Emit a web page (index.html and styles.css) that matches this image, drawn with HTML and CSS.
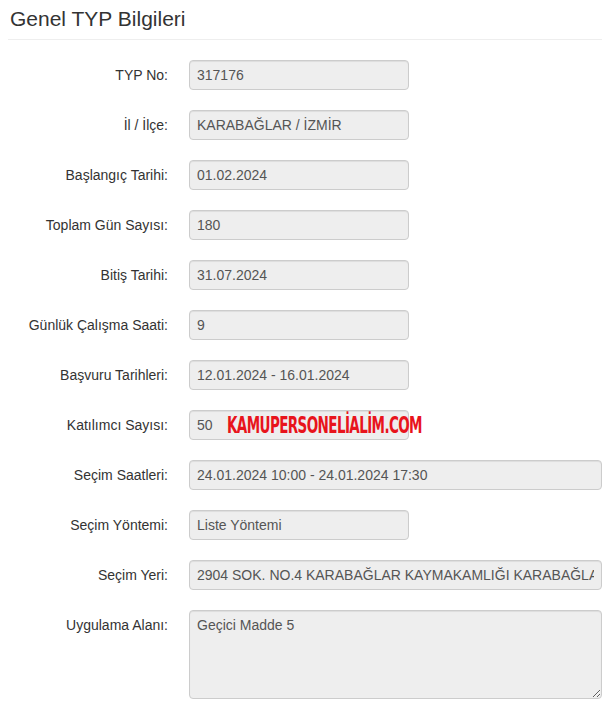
FILE: index.html
```html
<!DOCTYPE html>
<html lang="tr">
<head>
<meta charset="UTF-8" />
<meta name="viewport" content="width=device-width, initial-scale=1" />
<title>Genel TYP Bilgileri</title>
<link rel="stylesheet" href="styles.css">
</head>
<body>
<div class="panel">
  <h3 class="panel-title">Genel TYP Bilgileri</h3>

  <div class="form-row">
    <label>TYP No:</label>
    <input class="field" type="text" value="317176" readonly />
  </div>
  <div class="form-row">
    <label>İl / İlçe:</label>
    <input class="field" type="text" value="KARABAĞLAR / İZMİR" readonly />
  </div>
  <div class="form-row">
    <label>Başlangıç Tarihi:</label>
    <input class="field" type="text" value="01.02.2024" readonly />
  </div>
  <div class="form-row">
    <label>Toplam Gün Sayısı:</label>
    <input class="field" type="text" value="180" readonly />
  </div>
  <div class="form-row">
    <label>Bitiş Tarihi:</label>
    <input class="field" type="text" value="31.07.2024" readonly />
  </div>
  <div class="form-row">
    <label>Günlük Çalışma Saati:</label>
    <input class="field" type="text" value="9" readonly />
  </div>
  <div class="form-row">
    <label>Başvuru Tarihleri:</label>
    <input class="field" type="text" value="12.01.2024 - 16.01.2024" readonly />
  </div>
  <div class="form-row">
    <label>Katılımcı Sayısı:</label>
    <div class="field-wrap">
      <input class="field" type="text" value="50" readonly />
      <span class="watermark">KAMUPERSONELİALİM.COM</span>
    </div>
  </div>
  <div class="form-row">
    <label>Seçim Saatleri:</label>
    <input class="field wide" type="text" value="24.01.2024 10:00 - 24.01.2024 17:30" readonly />
  </div>
  <div class="form-row">
    <label>Seçim Yöntemi:</label>
    <input class="field" type="text" value="Liste Yöntemi" readonly />
  </div>
  <div class="form-row">
    <label>Seçim Yeri:</label>
    <input class="field wide" type="text" value="2904 SOK. NO.4 KARABAĞLAR KAYMAKAMLIĞI KARABAĞLAR / İZMİR" readonly />
  </div>
  <div class="form-row">
    <label>Uygulama Alanı:</label>
    <textarea class="field wide area" readonly>Geçici Madde 5</textarea>
  </div>
</div>
</body>
</html>
```

FILE: styles.css
```css
body {
  margin: 0;
  font-family: "Liberation Sans", Arial, sans-serif;
  font-size: 14px;
  color: #333;
  background: #fff;
}
.panel {
  padding: 0 7px 0 8px;
}
.panel-title {
  margin: 0 0 20px;
  padding: 7px 2px 8px;
  font-size: 21px;
  font-weight: normal;
  line-height: 24px;
  border-bottom: 1px solid #eee;
}
.form-row {
  display: flex;
  align-items: flex-start;
  margin-bottom: 20px;
}
.form-row label {
  width: 160px;
  flex-shrink: 0;
  text-align: right;
  padding-top: 7px;
  margin-right: 21px;
  line-height: 16px;
}
.field {
  box-sizing: border-box;
  width: 220px;
  height: 30px;
  padding: 6px 7px;
  font-family: inherit;
  font-size: 14px;
  color: #555;
  background: #eee;
  border: 1px solid #ccc;
  border-radius: 4px;
  box-shadow: inset 0 1px 1px rgba(0, 0, 0, 0.075);
  outline: none;
}
.field.wide {
  width: 413px;
}
.field.area {
  height: 89px;
  line-height: 16px;
  padding: 6px 7px;
  resize: vertical;
}
.field-wrap {
  position: relative;
}
.watermark {
  position: absolute;
  left: 38px;
  top: 2px;
  font-family: "DejaVu Sans Condensed", "DejaVu Sans", sans-serif;
  font-weight: bold;
  font-size: 15px;
  letter-spacing: -0.6px;
  color: #e8141c;
  white-space: nowrap;
  transform: scaleY(1.5);
  transform-origin: left top;
}
```
